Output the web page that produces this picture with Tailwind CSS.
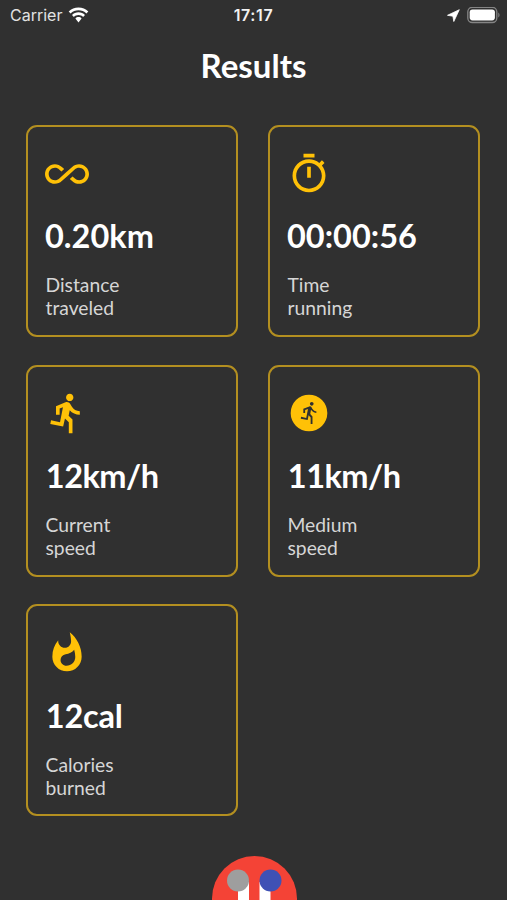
<!DOCTYPE html>
<html lang="en">
<head>
<meta charset="utf-8">
<title>Results</title>
<script src="https://cdn.jsdelivr.net/npm/@tailwindcss/browser@4"></script>
</head>
<body class="bg-[#303030]">
<div class="relative flex h-[900px] w-[507px] flex-col overflow-hidden bg-[#303030] font-['Lato',sans-serif] text-white">
  <header class="grid h-[30px] grid-cols-3 items-center pl-[10px] pr-[7px] font-['Inter',sans-serif]">
    <div class="flex items-center gap-[6px] text-[16px] text-[#e2e2e2]">
      <span>Carrier</span>
      <svg class="h-[16px] w-[21px]" viewBox="0 0 21 16" fill="#fff"><path d="M10.500 .5C6.700 .5 3.300 1.900 .7 4.400l1.900 2C4.700 4.400 7.500 3.300 10.500 3.300s5.800 1.100 7.900 3.100l1.900-2C17.700 1.900 14.300 .5 10.500 .5zM10.500 5.300c-2.500 0-4.800 1-6.500 2.600l1.900 2c1.200-1.100 2.800-1.800 4.600-1.800s3.400.7 4.600 1.800l1.900-2c-1.700-1.600-4-2.600-6.500-2.600zM10.500 10.100c-1.200 0-2.300.5-3.100 1.300l3.100 4 3.100-4c-.8-.8-1.900-1.300-3.100-1.300z"/></svg>
    </div>
    <span class="mr-[3px] text-center text-[16px] font-semibold tracking-[0.6px] text-[#f2f2f2]">17:17</span>
    <div class="flex items-center justify-end gap-[7px]">
      <svg class="h-[13px] w-[13px]" viewBox="0 0 13 13" fill="#fff" stroke="#fff" stroke-width=".8" stroke-linejoin="round"><path d="M12.300 .7L.5 6.300l5.400.9.900 5.300z"/></svg>
      <svg class="h-[17px] w-[33px]" viewBox="0 0 33 17"><rect x=".8" y=".3" width="29" height="15.200" rx="4.500" fill="none" stroke="#858585" stroke-width="1.300"/><rect x="2.700" y="2.400" width="25.200" height="11" rx="2.800" fill="#fff"/><path d="M31.300 5.500v5c1.600-.8 1.600-4.200 0-5z" fill="#858585"/></svg>
    </div>
  </header>
  <h1 class="mt-[15px] text-center text-[33px] leading-[40px] font-bold">Results</h1>
  <main class="mt-[40px] ml-[25.500px] grid grid-cols-[212px_212px] grid-rows-[212px_212px_212px] gap-x-[30px] gap-y-[27.500px]">
    <section class="rounded-[11px] border-2 border-[#b38f20] pt-[24.500px] pl-[17.500px]">
      <svg class="size-[44px]" viewBox="0 0 24 24" fill="#ffc107"><path d="M18.600 6.620c-1.440 0-2.800.56-3.770 1.530L12 10.660 10.480 12h.01L7.800 14.390c-.64.64-1.490.99-2.400.99-1.870 0-3.390-1.510-3.390-3.380S3.530 8.620 5.400 8.620c.91 0 1.760.35 2.440 1.030l1.130 1 1.510-1.340L9.220 8.200C8.200 7.180 6.840 6.620 5.400 6.620 2.420 6.620 0 9.040 0 12s2.420 5.380 5.400 5.380c1.440 0 2.800-.56 3.770-1.530l2.830-2.500.01.01L13.520 12h-.01l2.690-2.390c.64-.64 1.490-.99 2.400-.99 1.870 0 3.390 1.510 3.390 3.380s-1.520 3.380-3.390 3.380c-.9 0-1.760-.35-2.440-1.030l-1.140-1.010-1.510 1.340 1.270 1.120c1.020 1.010 2.370 1.570 3.820 1.570 2.980 0 5.400-2.410 5.400-5.380s-2.420-5.370-5.400-5.370z"/></svg>
      <p class="mt-[20.500px] text-[32.500px] leading-[40px] font-bold">0.20km</p>
      <p class="mt-[17px] pl-[0.500px] text-[19.300px] leading-[23px] text-[#d6d6d6]">Distance<br>traveled</p>
    </section>
    <section class="rounded-[11px] border-2 border-[#b38f20] pt-[24.500px] pl-[17.500px]">
      <svg class="size-[44px]" viewBox="0 0 24 24" fill="#ffc107"><path d="M15 1H9v2h6V1zm-4 13h2V8h-2v6zm8.030-6.610l1.420-1.420c-.43-.51-.9-.99-1.410-1.410l-1.420 1.420C16.070 4.740 14.120 4 12 4c-4.970 0-9 4.030-9 9s4.020 9 9 9 9-4.030 9-9c0-2.120-.74-4.070-1.970-5.610zM12 20c-3.870 0-7-3.130-7-7s3.130-7 7-7 7 3.130 7 7-3.130 7-7 7z"/></svg>
      <p class="mt-[20.500px] text-[32.500px] leading-[40px] font-bold">00:00:56</p>
      <p class="mt-[17px] pl-[0.500px] text-[19.300px] leading-[23px] text-[#d6d6d6]">Time<br>running</p>
    </section>
    <section class="rounded-[11px] border-2 border-[#b38f20] pt-[24.500px] pl-[17.500px]">
      <svg class="size-[44px]" viewBox="0 0 24 24" fill="#ffc107"><path d="M13.490 5.480c1.100 0 2-.9 2-2s-.9-2-2-2-2 .9-2 2 .9 2 2 2zm-3.600 13.900l1-4.400 2.100 2v6h2v-7.500l-2.100-2 .6-3c1.300 1.500 3.300 2.500 5.500 2.500v-2c-1.900 0-3.500-1-4.300-2.400l-1-1.600c-.4-.6-1-1-1.700-1-.3 0-.5.1-.8.1l-5.200 2.200v4.700h2v-3.400l1.800-.7-1.600 8.100-4.900-1-.4 2 7 1.400z"/></svg>
      <p class="mt-[20.500px] pl-[0.800px] text-[32.500px] leading-[40px] font-bold tracking-[-0.500px]">12km/h</p>
      <p class="mt-[17px] pl-[0.500px] text-[19.300px] leading-[23px] text-[#d6d6d6]">Current<br>speed</p>
    </section>
    <section class="rounded-[11px] border-2 border-[#b38f20] pt-[24.500px] pl-[17.500px]">
      <svg class="size-[44px]" viewBox="0 0 24 24"><circle cx="12" cy="12" r="10" fill="#ffc107"/><path fill="#303030" d="M13.500 6c.55 0 1 .45 1 1s-.45 1-1 1-1-.45-1-1 .45-1 1-1zm2.500 6c-.7 0-2.010-.54-2.910-1.760l-.41 2.350 1.220 1.310V18h-1v-3.580l-1.110-1.210-.52 2.640-3.770-.77.2-.98 2.780.57.96-4.890-1.540.57V12H8.900V9.650l3.280-1.210c.49-.18 1.030.06 1.260.53C14.370 10.880 15.590 11 16 11v1z"/></svg>
      <p class="mt-[20.500px] pl-[0.800px] text-[32.500px] leading-[40px] font-bold tracking-[-0.500px]">11km/h</p>
      <p class="mt-[17px] pl-[0.500px] text-[19.300px] leading-[23px] text-[#d6d6d6]">Medium<br>speed</p>
    </section>
    <section class="rounded-[11px] border-2 border-[#b38f20] pt-[24.500px] pl-[17.500px]">
      <svg class="size-[44px]" viewBox="0 0 24 24" fill="#ffc107"><path d="M13.500.67s.74 2.650.74 4.800c0 2.060-1.350 3.730-3.410 3.730-2.070 0-3.630-1.670-3.630-3.730l.03-.36C5.210 7.510 4 10.620 4 14c0 4.420 3.580 8 8 8s8-3.580 8-8C20 8.610 17.410 3.800 13.500.67zM11.710 19c-1.780 0-3.220-1.400-3.220-3.140 0-1.620 1.050-2.760 2.810-3.120 1.770-.36 3.600-1.210 4.620-2.580.39 1.290.59 2.650.59 4.040 0 2.650-2.150 4.800-4.800 4.800z"/></svg>
      <p class="mt-[21px] pl-[0.800px] text-[32.500px] leading-[40px] font-bold tracking-[-0.200px]">12cal</p>
      <p class="mt-[17px] pl-[0.500px] text-[19.300px] leading-[23px] text-[#d6d6d6]">Calories<br>burned</p>
    </section>
  </main>
  <div class="absolute top-[856px] left-[211.500px] size-[85px] rounded-full bg-[#f44336]">
    <svg class="size-full" viewBox="0 0 85 85"><path fill="#fff" d="M26 26h11v40H26zM47.500 26h11v40h-11z"/><circle cx="26" cy="24.500" r="11" fill="#9e9e9e"/><circle cx="58.500" cy="24.500" r="11" fill="#3f51b5"/></svg>
  </div>
</div>
</body>
</html>
